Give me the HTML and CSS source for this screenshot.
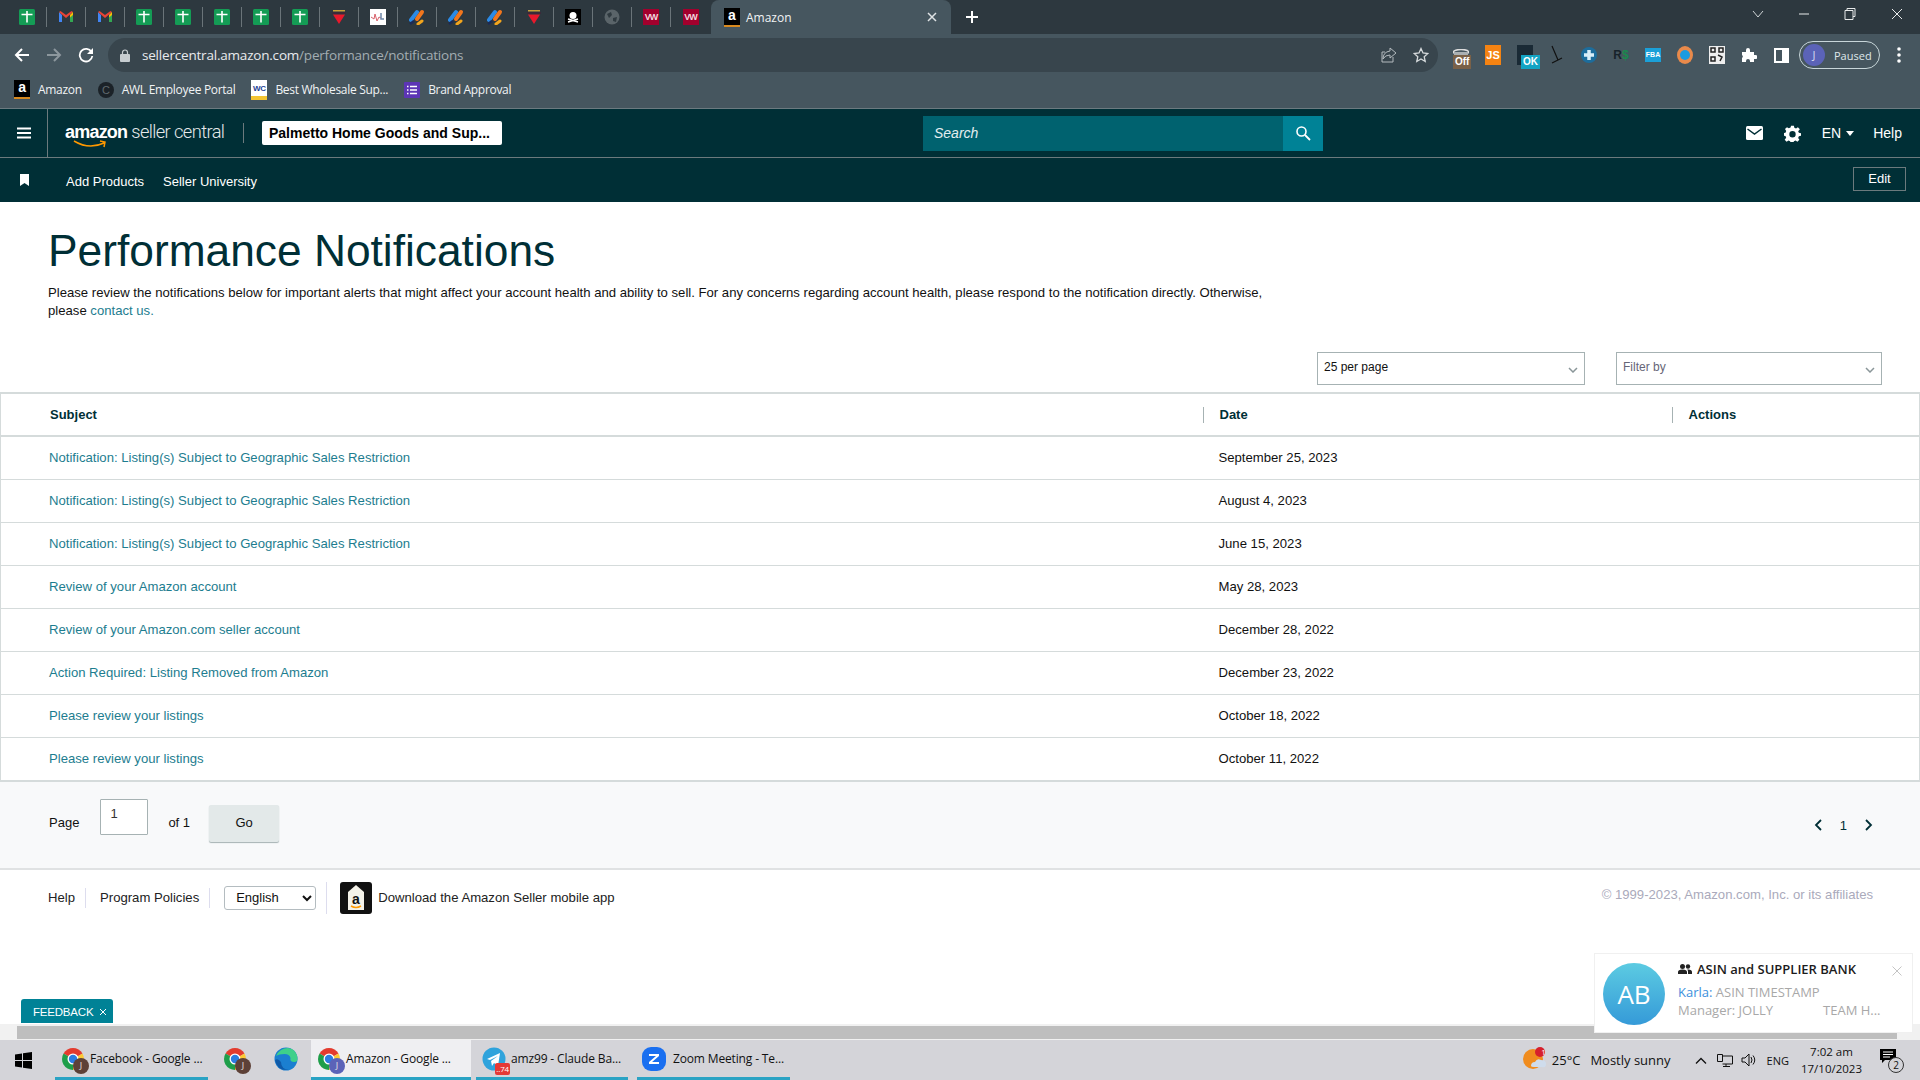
FILE: index.html
```html
<!DOCTYPE html>
<html lang="en">
<head>
    <meta charset="UTF-8">
    <title>Amazon</title>
    <link rel="stylesheet" href="styles.css">
</head>
<body>
    <svg class="defs" width="0" height="0">
        <symbol id="sheet" viewBox="0 0 16 16"><rect width="16" height="16" rx="1.5" fill="#149c55"/><path d="M2.5 5.5h11M8 2v11.5" stroke="#fff" stroke-width="1.6" fill="none"/></symbol>
        <symbol id="gmail" viewBox="0 0 16 16"><path d="M1 3v10h3V6z" fill="#4285f4"/><path d="M15 3v10h-3V6z" fill="#34a853"/><path d="M1 3l7 6 7-6-1.5-1L8 6 2.500 2z" fill="#ea4335"/><path d="M12 6l3-3v3l-3 2.500z" fill="#fbbc04"/></symbol>
        <symbol id="funnel" viewBox="0 0 16 16"><path d="M2 1h12v1.500H2z" fill="#c9a13a"/><rect x="1" y="3" width="14" height="2" fill="#3a2a3a"/><path d="M2 5.500h12L8 15z" fill="#e8192c"/></symbol>
        <symbol id="chart" viewBox="0 0 16 16"><rect width="16" height="16" fill="#fff"/><path d="M1 8l3 2 1-5 2 7 2-4 2 1" stroke="#d8606a" fill="none"/><path d="M11 4v6h3" stroke="#6d86a8" stroke-width="1.500" fill="none"/></symbol>
        <symbol id="pills" viewBox="0 0 16 16"><path d="M2 11l6-8" stroke="#2b8ae6" stroke-width="4" stroke-linecap="round"/><path d="M8 10l5-7" stroke="#f2761d" stroke-width="4" stroke-linecap="round"/><path d="M1 15l4-3" stroke="#1c2a55" stroke-width="2.500"/><path d="M9 15l4-3" stroke="#f2a51d" stroke-width="3" stroke-linecap="round"/></symbol>
        <symbol id="skull" viewBox="0 0 16 16"><rect width="16" height="16" fill="#000"/><circle cx="8" cy="6.500" r="3.500" fill="#fff"/><path d="M3 10l10 3M13 10L3 13" stroke="#fff" stroke-width="1.500"/></symbol>
        <symbol id="globe" viewBox="0 0 16 16"><circle cx="8" cy="8" r="7.500" fill="#5a6469"/><path d="M3 5l4-2 1 3-3 3zM9 9l4-1-1 5-3-1z" fill="#2f3a40"/></symbol>
        <symbol id="chrome" viewBox="0 0 24 24"><path d="M12 12L2.500 6.500A11 11 0 0 1 21.500 6.500Z" fill="#e33b2e"/><path d="M12 12L21.500 6.500A11 11 0 0 1 12 23Z" fill="#fcc934"/><path d="M12 12L12 23A11 11 0 0 1 2.500 6.500Z" fill="#1e9e4a"/><circle cx="12" cy="12" r="5.500" fill="#fff"/><circle cx="12" cy="12" r="4.200" fill="#2c7de1"/></symbol>
    </svg>

    <div class="tabstrip">
        <div class="tab"><svg class="fav"><use href="#sheet"/></svg></div>
        <div class="tab"><svg class="fav"><use href="#gmail"/></svg></div>
        <div class="tab"><svg class="fav"><use href="#gmail"/></svg></div>
        <div class="tab"><svg class="fav"><use href="#sheet"/></svg></div>
        <div class="tab"><svg class="fav"><use href="#sheet"/></svg></div>
        <div class="tab"><svg class="fav"><use href="#sheet"/></svg></div>
        <div class="tab"><svg class="fav"><use href="#sheet"/></svg></div>
        <div class="tab"><svg class="fav"><use href="#sheet"/></svg></div>
        <div class="tab"><svg class="fav"><use href="#funnel"/></svg></div>
        <div class="tab"><svg class="fav"><use href="#chart"/></svg></div>
        <div class="tab"><svg class="fav"><use href="#pills"/></svg></div>
        <div class="tab"><svg class="fav"><use href="#pills"/></svg></div>
        <div class="tab"><svg class="fav"><use href="#pills"/></svg></div>
        <div class="tab"><svg class="fav"><use href="#funnel"/></svg></div>
        <div class="tab"><svg class="fav"><use href="#skull"/></svg></div>
        <div class="tab"><svg class="fav"><use href="#globe"/></svg></div>
        <div class="tab"><span class="fav-wired">VW</span></div>
        <div class="tab tab-last"><span class="fav-wired">VW</span></div>
        <div class="tab-active">
            <span class="fav-amz">a</span>
            <span class="tab-title">Amazon</span>
            <svg class="tab-close" width="10" height="10" viewBox="0 0 10 10"><path d="M1 1l8 8M9 1l-8 8" stroke="#dfe3e5" stroke-width="1.500"/></svg>
        </div>
        <svg class="tab-new" width="14" height="14" viewBox="0 0 14 14"><path d="M7 1v12M1 7h12" stroke="#fff" stroke-width="2"/></svg>
        <div class="win-controls">
            <svg width="12" height="8" viewBox="0 0 12 8"><path d="M1 1l5 6 5-6" stroke="#cfd4d6" fill="none"/></svg>
            <svg width="10" height="2" viewBox="0 0 10 2"><path d="M0 1h10" stroke="#e8eaeb"/></svg>
            <svg width="12" height="12" viewBox="0 0 12 12"><path d="M3 2.500V.5h8v8H9M1 2.500h8v9H1z" stroke="#e8eaeb" fill="none"/></svg>
            <svg width="12" height="12" viewBox="0 0 12 12"><path d="M1 1l10 10M11 1L1 11" stroke="#e8eaeb"/></svg>
        </div>
    </div>

    <div class="toolbar">
        <svg class="nav-btn" width="16" height="16" viewBox="0 0 16 16"><path d="M15 8H2M8 2L2 8l6 6" stroke="#fff" stroke-width="2" fill="none"/></svg>
        <svg class="nav-btn" width="16" height="16" viewBox="0 0 16 16"><path d="M1 8h13M8 2l6 6-6 6" stroke="#8c979d" stroke-width="2" fill="none"/></svg>
        <svg class="nav-btn" width="16" height="16" viewBox="0 0 16 16"><path d="M13.500 5A6.300 6.300 0 1 0 14.300 9" stroke="#fff" stroke-width="1.800" fill="none"/><path d="M15 1v6H9z" fill="#fff"/></svg>
        <div class="omnibox">
            <svg class="lock" width="10" height="13" viewBox="0 0 10 13"><path d="M2.500 6V3.500a2.500 2.500 0 0 1 5 0V6" stroke="#c6ccd0" stroke-width="1.200" fill="none"/><rect y="5" width="10" height="8" rx="1" fill="#c6ccd0"/></svg>
            <span class="url">sellercentral.amazon.com<span class="url-path">/performance/notifications</span></span>
            <svg class="omni-icon" width="16" height="16" viewBox="0 0 16 16"><path d="M9 1l6 5-6 5V8Q4 8 2 12q0-7 7-8zM12 10v5H1V5h3" stroke="#b4bbbf" fill="none"/></svg>
            <svg class="omni-icon" width="16" height="16" viewBox="0 0 16 16"><path d="M8 1.500l2 4.500 4.800.5-3.600 3.200 1 4.800L8 12l-4.200 2.500 1-4.800L1.200 6.500 6 6z" stroke="#d5d9db" stroke-width="1.300" fill="none"/></svg>
        </div>
        <div class="extensions">
            <div class="ext"><svg width="16" height="12" viewBox="0 0 16 12"><ellipse cx="8" cy="3" rx="7.500" ry="2.500" fill="none" stroke="#ddd" stroke-width="1.500"/><path d="M1 3v8h14V3" fill="#aab0b3"/></svg><span class="ext-off">Off</span></div>
            <div class="ext"><span class="ext-js">JS</span></div>
            <div class="ext"><span class="ext-dark"></span><span class="ext-ok">OK</span></div>
            <div class="ext"><svg width="12" height="20" viewBox="0 0 12 20"><path d="M1 1l6 14M1 18l10-5" stroke="#111" stroke-width="1.200"/></svg></div>
            <div class="ext"><svg width="16" height="16" viewBox="0 0 16 16"><circle cx="8" cy="8" r="8" fill="#1d6d9c"/><path d="M8 3v10M3 8h10" stroke="#d9eef8" stroke-width="3.500"/></svg></div>
            <div class="ext"><span class="ext-rs">R<b>$</b></span></div>
            <div class="ext"><span class="ext-fba">FBA</span></div>
            <div class="ext"><svg width="16" height="18" viewBox="0 0 16 18"><ellipse cx="8" cy="9" rx="8" ry="9" fill="#e98a4b"/><circle cx="8" cy="9" r="5" fill="#1b9be0"/></svg></div>
            <div class="ext"><svg width="16" height="18" viewBox="0 0 16 18"><rect width="16" height="18" fill="#eee"/><path d="M2 2h4v4H2zM10 2h4v4h-4zM2 11h4v4H2zM9 9l4 2-2 4" fill="none" stroke="#222" stroke-width="1.500"/></svg></div>
            <div class="ext"><svg width="16" height="16" viewBox="0 0 16 16"><path d="M1 5h4V3a2 2 0 0 1 4 0v2h4v3h1.500a2 2 0 0 1 0 4H13v3H9v-1a2 2 0 0 0-4 0v1H1v-4a2 2 0 0 0 0-3z" fill="#fff"/></svg></div>
            <div class="ext"><span class="ext-panel"></span></div>
        </div>
        <div class="profile"><span class="profile-avatar">J</span><span>Paused</span></div>
        <svg class="more" width="4" height="16" viewBox="0 0 4 16"><circle cx="2" cy="2" r="1.800" fill="#fff"/><circle cx="2" cy="8" r="1.800" fill="#fff"/><circle cx="2" cy="14" r="1.800" fill="#fff"/></svg>
    </div>

    <div class="bookmarks">
        <div class="bm"><span class="fav-amz">a</span>Amazon</div>
        <div class="bm"><span class="fav-c">C</span>AWL Employee Portal</div>
        <div class="bm"><span class="fav-wc">WC</span>Best Wholesale Sup...</div>
        <div class="bm"><svg width="16" height="16" viewBox="0 0 16 16"><rect width="16" height="16" rx="1" fill="#5c35b5"/><path d="M3 4.500h1.500M3 8h1.500M3 11.500h1.500M6 4.500h7M6 8h7M6 11.500h7" stroke="#fff" stroke-width="1.500"/></svg>Brand Approval</div>
    </div>

    <header class="topbar">
        <div class="menu-cell">
            <svg width="14" height="12" viewBox="0 0 14 12"><path d="M0 1.500h14M0 6h14M0 10.500h14" stroke="#fff" stroke-width="1.800"/></svg>
        </div>
        <div class="logo"><span class="logo-amazon">amazon</span><span class="logo-seller">seller central</span>
            <svg class="logo-smile" width="34" height="9" viewBox="0 0 34 9"><path d="M1 1q15 9 30 2M27 1l5 1-1 5" stroke="#f90" stroke-width="1.500" fill="none"/></svg>
        </div>
        <span class="logo-sep"></span>
        <div class="account">Palmetto Home Goods and Sup...</div>
        <div class="search">
            <span class="search-text">Search</span>
            <span class="search-btn"><svg width="16" height="16" viewBox="0 0 16 16"><circle cx="6.500" cy="6.500" r="4.500" stroke="#fff" stroke-width="1.600" fill="none"/><path d="M10 10l5 5" stroke="#fff" stroke-width="1.800"/></svg></span>
        </div>
        <div class="top-right">
            <svg width="17" height="14" viewBox="0 0 17 14"><rect width="17" height="14" rx="1.500" fill="#fff"/><path d="M1.500 3l7 5 7-5" stroke="#002f36" stroke-width="1.500" fill="none"/></svg>
            <svg class="gear" width="17" height="17" viewBox="0 0 24 24"><path fill="#fff" fill-rule="evenodd" d="M10 1h4l.6 3 2.400 1 2.600-1.700 2.800 2.800L20 8.700l1 2.400 3 .6v3.600l-3 .6-1 2.400 1.700 2.600-2.800 2.800-2.600-1.700-2.400 1-.6 3h-4l-.6-3-2.400-1-2.600 1.700-2.800-2.800L3.100 18l-1-2.400-3-.6v-3.600l3-.6 1-2.400L1.400 5.800l2.800-2.800L6.800 4.700l2.400-1zM12 8.500a4.500 4.500 0 1 0 0 9 4.500 4.500 0 0 0 0-9z"/></svg>
            <span class="lang">EN<svg width="8" height="5" viewBox="0 0 8 5"><path d="M0 0h8L4 5z" fill="#fff"/></svg></span>
            <span>Help</span>
        </div>
    </header>

    <nav class="subnav">
        <svg class="subnav-mark" width="9" height="12" viewBox="0 0 9 12"><path d="M0 0h9v12L4.500 9 0 12z" fill="#fff"/></svg>
        <a class="subnav-link">Add Products</a>
        <a class="subnav-link">Seller University</a>
        <span class="edit-btn">Edit</span>
    </nav>

    <main class="page">
        <h1 class="title">Performance Notifications</h1>
        <div class="intro">
            <p class="intro-line">Please review the notifications below for important alerts that might affect your account health and ability to sell. For any concerns regarding account health, please respond to the notification directly. Otherwise,</p>
            <p class="intro-line">please <a class="link">contact us.</a></p>
        </div>

        <div class="filters">
            <div class="picker picker-page">25 per page<svg width="10" height="6" viewBox="0 0 10 6"><path d="M1 1l4 4 4-4" stroke="#8a9699" stroke-width="1.500" fill="none"/></svg></div>
            <div class="picker picker-filter">Filter by<svg width="10" height="6" viewBox="0 0 10 6"><path d="M1 1l4 4 4-4" stroke="#8a9699" stroke-width="1.500" fill="none"/></svg></div>
        </div>

        <table class="notes">
            <colgroup><col class="col-subject"><col class="col-date"><col></colgroup>
            <thead>
                <tr>
                    <th><span>Subject</span></th>
                    <th><span class="th-div">Date</span></th>
                    <th><span class="th-div">Actions</span></th>
                </tr>
            </thead>
            <tbody>
                <tr><td><a class="link">Notification: Listing(s) Subject to Geographic Sales Restriction</a></td><td>September 25, 2023</td><td></td></tr>
                <tr><td><a class="link">Notification: Listing(s) Subject to Geographic Sales Restriction</a></td><td>August 4, 2023</td><td></td></tr>
                <tr><td><a class="link">Notification: Listing(s) Subject to Geographic Sales Restriction</a></td><td>June 15, 2023</td><td></td></tr>
                <tr><td><a class="link">Review of your Amazon account</a></td><td>May 28, 2023</td><td></td></tr>
                <tr><td><a class="link">Review of your Amazon.com seller account</a></td><td>December 28, 2022</td><td></td></tr>
                <tr><td><a class="link">Action Required: Listing Removed from Amazon</a></td><td>December 23, 2022</td><td></td></tr>
                <tr><td><a class="link">Please review your listings</a></td><td>October 18, 2022</td><td></td></tr>
                <tr><td><a class="link">Please review your listings</a></td><td>October 11, 2022</td><td></td></tr>
            </tbody>
        </table>

        <div class="pager">
            <span class="pager-label">Page</span>
            <input class="pager-input" value="1">
            <span class="pager-of">of 1</span>
            <span class="go-btn">Go</span>
            <div class="pager-nums">
                <svg width="8" height="12" viewBox="0 0 8 12"><path d="M7 1L2 6l5 5" stroke="#002f36" stroke-width="1.800" fill="none"/></svg>
                <span>1</span>
                <svg width="8" height="12" viewBox="0 0 8 12"><path d="M1 1l5 5-5 5" stroke="#002f36" stroke-width="1.800" fill="none"/></svg>
            </div>
        </div>

        <footer class="footer">
            <a class="foot-link">Help</a>
            <a class="foot-link foot-second">Program Policies</a>
            <select class="foot-lang"><option>English</option></select>
            <span class="foot-app">
                <svg width="32" height="32" viewBox="0 0 32 32"><rect width="32" height="32" rx="3" fill="#111"/><path d="M16 3l8 7v18H8V10z" fill="#f4f2e9"/><path d="M11 24q5 3 10 0" stroke="#f90" stroke-width="1.500" fill="none"/><text x="16" y="22" text-anchor="middle" font-family="Liberation Sans" font-weight="700" font-size="14" fill="#111">a</text></svg>
                Download the Amazon Seller mobile app
            </span>
            <span class="copyright">© 1999-2023, Amazon.com, Inc. or its affiliates</span>
        </footer>

        <div class="scrollbar"><span class="scroll-arrow"></span><span class="scroll-thumb"></span></div>
    </main>

    <div class="feedback">FEEDBACK<svg width="8" height="8" viewBox="0 0 8 8"><path d="M1 1l6 6M7 1L1 7" stroke="#fff"/></svg></div>

    <div class="toast">
        <span class="toast-avatar">AB</span>
        <div class="toast-body">
            <div class="toast-title"><svg width="14" height="10" viewBox="0 0 14 10"><circle cx="4.500" cy="2.500" r="2.500" fill="#222"/><circle cx="10" cy="2.500" r="2.200" fill="#222"/><path d="M0 10V8q0-2.500 4.500-2.500T9 8v2zM10 10V7.500q0-1-.8-2 4.800-.4 4.800 2.500v2z" fill="#222"/></svg>ASIN and SUPPLIER BANK</div>
            <div class="toast-line"><span class="toast-name">Karla:</span> ASIN TIMESTAMP</div>
            <div class="toast-line toast-split"><span>Manager: JOLLY</span><span>TEAM H...</span></div>
        </div>
        <svg class="toast-close" width="10" height="10" viewBox="0 0 10 10"><path d="M.5.5l9 9M9.500.5l-9 9" stroke="#c4c4c4"/></svg>
    </div>

    <div class="taskbar">
        <svg class="win-logo" width="17" height="17" viewBox="0 0 17 17"><path d="M0 2.500l7-1V8H0zM8 1.300L17 0v8H8zM0 9h7v6.500l-7-1zM8 9h9v8l-9-1.300z" fill="#000"/></svg>
        <div class="tb-item tb-fb"><span class="tb-icon"><svg width="24" height="24"><use href="#chrome"/></svg><span class="tb-badge tb-brown">J</span></span>Facebook - Google ...</div>
        <div class="tb-plain tb-chrome2"><span class="tb-icon"><svg width="24" height="24"><use href="#chrome"/></svg><span class="tb-badge tb-brown">J</span></span></div>
        <div class="tb-plain tb-edge"><svg width="24" height="24" viewBox="0 0 24 24"><circle cx="12" cy="12" r="11.500" fill="#1b7fd0"/><path d="M2 9Q6 1 14 1q9 1 9.500 11 0 3-3 3-5 0-4-4-1-4-6-4-6 0-8.500 2z" fill="#3ed08a"/><path d="M7 15q0 7 8 8-12 1-14-10 3-2 6 2z" fill="#0f5aa8"/></svg></div>
        <div class="tb-item tb-active"><span class="tb-icon"><svg width="24" height="24"><use href="#chrome"/></svg><span class="tb-badge tb-blue">J</span></span>Amazon - Google ...</div>
        <div class="tb-item tb-tele"><span class="tb-icon"><svg width="24" height="24" viewBox="0 0 24 24"><circle cx="12" cy="12" r="11.500" fill="#2fa3dc"/><path d="M5 12l13-6-2 13-4-3-2 3-1-5 7-5-8 4z" fill="#fff"/></svg><span class="tb-count">..74</span></span>amz99 - Claude Ba...</div>
        <div class="tb-item tb-zoom"><span class="tb-icon"><svg width="24" height="24" viewBox="0 0 24 24"><rect width="24" height="24" rx="9" fill="#1a6ff0"/><path d="M7 7h10v2l-7 6h7v2H7v-2l7-6H7z" fill="#fff"/></svg></span>Zoom Meeting - Te...</div>
        <div class="tray">
            <span class="weather"><svg width="24" height="24" viewBox="0 0 24 24"><circle cx="10" cy="12" r="10" fill="#f08c1e"/><path d="M8 19q0-4 4-4 2-4 6-2 5 0 5 4t-4 3H11q-3 0-3-1z" fill="#cfdcec"/><circle cx="17" cy="5" r="5" fill="#d6202c"/></svg><span class="weather-num">1</span></span>
            <span class="tray-temp">25°C</span>
            <span class="tray-sky">Mostly sunny</span>
            <svg class="tray-up" width="12" height="7" viewBox="0 0 12 7"><path d="M1 6.500l5-5 5 5" stroke="#111" stroke-width="1.300" fill="none"/></svg>
            <svg width="16" height="14" viewBox="0 0 16 14"><path d="M.5 1.500h5v7h-5zM5.500 3h10v8h-10M9 11v2.500M6 13.500h7" stroke="#111" fill="none"/></svg>
            <svg width="16" height="14" viewBox="0 0 16 14"><path d="M1 5h3l4-4v12L4 9H1zM10 4q2 3 0 6M12 2.500q3.500 4.500 0 9" stroke="#111" fill="none"/></svg>
            <span class="tray-lang">ENG</span>
            <span class="tray-clock">7:02 am<br>17/10/2023</span>
            <span class="tray-note"><svg width="16" height="15" viewBox="0 0 16 15"><path d="M0 0h16v11H5l-3 3v-3H0z" fill="#000"/><path d="M3 3h10M3 5.500h10M3 8h7" stroke="#fff"/></svg><span class="tray-note-num">2</span></span>
        </div>
    </div>
</body>
</html>
```
FILE: styles.css
```css
* {box-sizing: border-box;}
html, body {
    margin: 0;
    height: 100%;
}
body {
    display: flex;
    flex-direction: column;
    height: 1080px;
    overflow: hidden;
    position: relative;
    background: #fff;
    color: #111;
    font-family: "Liberation Sans", Arial, sans-serif;
    font-size: 13px;
}
.defs {
    position: absolute;
}
svg {
    flex: none;
}
a {
    text-decoration: none;
}

/* browser tabs */
.tabstrip {
    display: flex;
    align-items: center;
    flex: none;
    height: 34px;
    padding-left: 8px;
    background: #2d383f;
}
.tab {
    display: flex;
    align-items: center;
    justify-content: center;
    width: 39px;
    height: 20px;
    border-right: 1px solid #6a7479;
}
.tab-last {
    border-right: none;
}
.fav {
    width: 16px;
    height: 16px;
}
.fav-wired {
    display: block;
    width: 16px;
    height: 16px;
    overflow: hidden;
    background: #a3002d;
    color: #f0d8de;
    font: 700 9px/16px "Liberation Sans", sans-serif;
    letter-spacing: -1px;
    text-align: center;
}
.fav-amz {
    display: block;
    flex: none;
    width: 16px;
    height: 19px;
    background: #000;
    color: #fff;
    font: 700 14px/15px "Liberation Sans", sans-serif;
    text-align: center;
    border-bottom: 2px solid #d98a1f;
}
.tab-active {
    display: flex;
    align-items: center;
    width: 240px;
    height: 34px;
    margin-left: 1px;
    padding: 0 14px 0 13px;
    border-radius: 8px 8px 0 0;
    background: #46565f;
    color: #f1f3f4;
    font: 12px "Open Sans", sans-serif;
}
.tab-title {
    flex: 1;
    margin-left: 6px;
}
.tab-new {
    margin-left: 14px;
}
.win-controls {
    display: flex;
    align-items: center;
    gap: 35px;
    margin-left: auto;
    margin-right: 17px;
    margin-bottom: 6px;
}

/* address bar */
.toolbar {
    display: flex;
    align-items: center;
    flex: none;
    height: 38px;
    padding: 4px 0 0 14px;
    background: #46565f;
}
.nav-btn {
    margin-right: 16px;
}
.omnibox {
    display: flex;
    align-items: center;
    width: 1330px;
    height: 34px;
    margin-left: -2px;
    padding: 0 9px 0 12px;
    border-radius: 17px;
    background: #38454d;
}
.lock {
    margin-right: 12px;
}
.url {
    flex: 1;
    color: #e8eaed;
    font: 13.5px "Open Sans", sans-serif;
    letter-spacing: -0.2px;
}
.url-path {
    color: #a3adb2;
}
.omni-icon {
    margin-left: 16px;
}
.extensions {
    display: flex;
    margin-left: 7px;
}
.ext {
    display: flex;
    align-items: center;
    justify-content: center;
    position: relative;
    width: 32px;
    height: 30px;
}
.ext-off, .ext-ok {
    position: absolute;
    left: 8px;
    top: 15px;
    padding: 0 2px;
    color: #fff;
    font: 700 10px/14px "Liberation Sans", sans-serif;
}
.ext-off {
    background: #7a6148;
}
.ext-ok {
    left: 12px;
    background: #12a4c4;
}
.ext-js {
    display: block;
    width: 16px;
    height: 20px;
    background: #f58312;
    color: #fff;
    font: 700 11px/20px "Liberation Sans", sans-serif;
    text-align: center;
}
.ext-dark {
    display: block;
    width: 16px;
    height: 20px;
    background: #1a2a35;
}
.ext-rs {
    color: #17232a;
    font: 700 12px "Liberation Sans", sans-serif;
}
.ext-rs b {
    color: #1a8a4e;
}
.ext-fba {
    display: block;
    width: 16px;
    height: 14px;
    background: #1ba0d8;
    color: #fff;
    font: 700 7px/14px "Liberation Sans", sans-serif;
    text-align: center;
}
.ext-panel {
    display: block;
    width: 15px;
    height: 15px;
    border: 2px solid #fff;
    border-right-width: 7px;
}
.profile {
    display: flex;
    align-items: center;
    gap: 9px;
    width: 81px;
    height: 28px;
    margin-left: 2px;
    padding-left: 3px;
    border: 1px solid #c8d6da;
    border-radius: 14px;
    color: #dfe7ea;
    font: 11px "Open Sans", sans-serif;
}
.profile-avatar {
    width: 22px;
    height: 22px;
    border-radius: 50%;
    background: #5b63b8;
    color: #d8dbf2;
    line-height: 22px;
    text-align: center;
}
.more {
    margin-left: 17px;
}

/* bookmarks */
.bookmarks {
    display: flex;
    align-items: center;
    flex: none;
    gap: 16px;
    height: 37px;
    padding: 0 0 1px 14px;
    background: #46565f;
    color: #f1f3f4;
    font: 12px "Open Sans", sans-serif;
    letter-spacing: -0.3px;
    border-bottom: 1px solid #6c7a80;
}
.bm {
    display: flex;
    align-items: center;
    gap: 8px;
}
.fav-c {
    display: block;
    width: 16px;
    height: 16px;
    border-radius: 50%;
    background: #1b2228;
    color: #60696e;
    font: 11px/16px "Liberation Sans", sans-serif;
    text-align: center;
}
.fav-wc {
    display: block;
    width: 16px;
    height: 20px;
    padding-top: 3px;
    background: #fff;
    border-bottom: 4px solid #f4c430;
    color: #1d3f94;
    font: 700 8px/11px "Liberation Sans", sans-serif;
    text-align: center;
}

/* seller central header */
.topbar {
    display: flex;
    align-items: center;
    flex: none;
    height: 49px;
    background: #002f36;
    border-bottom: 1px solid #6b7a7d;
    color: #fff;
}
.menu-cell {
    display: flex;
    align-items: center;
    justify-content: center;
    width: 48px;
    height: 48px;
    border-right: 1px solid #6b7a7d;
}
.logo {
    position: relative;
    display: flex;
    flex: none;
    align-items: baseline;
    width: 160px;
    margin-left: 17px;
    margin-top: -3px;
    white-space: nowrap;
}
.logo-amazon {
    font-size: 18px;
    font-weight: 700;
    letter-spacing: -0.8px;
}
.logo-seller {
    margin-left: 4px;
    color: #e6eaeb;
    font: 300 18.3px Roboto, sans-serif;
    letter-spacing: -0.6px;
}
.logo-smile {
    position: absolute;
    left: 8px;
    top: 19px;
}
.logo-sep {
    width: 1px;
    height: 20px;
    margin-left: 18px;
    background: #6b7a7d;
}
.account {
    width: 240px;
    height: 24px;
    margin-left: 18px;
    padding-left: 7px;
    border-radius: 2px;
    background: #fff;
    color: #000;
    font: 700 14px/24px "Liberation Sans", sans-serif;
}
.search {
    display: flex;
    width: 400px;
    height: 35px;
    margin-left: 421px;
    background: #00626f;
}
.search-text {
    flex: 1;
    padding-left: 11px;
    color: #e4eef0;
    font-size: 14px;
    font-style: italic;
    line-height: 35px;
}
.search-btn {
    display: flex;
    align-items: center;
    justify-content: center;
    width: 40px;
    background: #008296;
}
.top-right {
    display: flex;
    align-items: center;
    margin-left: auto;
    margin-right: 18px;
    font-size: 14px;
}
.gear {
    margin-left: 21px;
}
.lang {
    display: flex;
    align-items: center;
    gap: 5px;
    margin: 0 19px 0 21px;
}

/* shortcuts bar */
.subnav {
    display: flex;
    align-items: center;
    flex: none;
    height: 44px;
    padding: 3px 0 0 20px;
    background: #002f36;
    color: #fff;
}
.subnav-mark {
    margin-right: 37px;
    margin-bottom: 3px;
}
.subnav-link {
    margin-right: 19px;
    font-size: 13px;
}
.edit-btn {
    width: 53px;
    height: 24px;
    margin: -5px 14px 0 auto;
    border: 1px solid #6b7a7d;
    font-size: 13px;
    line-height: 22px;
    text-align: center;
}

/* page */
.page {
    display: flex;
    flex-direction: column;
    flex: 1;
    min-height: 0;
}
.title {
    margin: 24px 0 0 48px;
    color: #002f36;
    font-size: 44.3px;
    font-weight: 400;
    line-height: 50px;
}
.intro {
    margin: 8px 0 0 48px;
    color: #111;
    font-size: 13.13px;
    line-height: 18px;
}
.intro-line {
    margin: 0;
}
.link {
    color: #1d7d8f;
}
.filters {
    display: flex;
    justify-content: flex-end;
    gap: 31px;
    margin: 32px 38px 0 0;
    height: 33px;
}
.picker {
    display: flex;
    align-items: center;
    justify-content: space-between;
    height: 33px;
    padding: 0 6px 3px 6px;
    border: 1px solid #a6b2b3;
    font-size: 12px;
}
.picker svg {
    margin-top: 5px;
}
.picker-page {
    width: 268px;
}
.picker-filter {
    width: 266px;
    color: #667;
}
.notes {
    width: 100%;
    margin-top: 7px;
    border-collapse: collapse;
    table-layout: fixed;
    border: 1px solid #d5dbdb;
    border-top-width: 2px;
}
.col-subject {
    width: 1202px;
}
.col-date {
    width: 469px;
}
.notes th {
    height: 43px;
    padding: 0;
    text-align: left;
    color: #002f36;
    font-size: 13px;
    border-bottom: 2px solid #d5dbdb;
}
.notes th span {
    display: block;
    line-height: 16px;
    padding-left: 49px;
}
.notes th .th-div {
    padding-left: 16px;
    border-left: 1px solid #a6b2b3;
}
.notes td {
    height: 43px;
    padding: 0 0 0 48px;
    border-bottom: 1px solid #d5dbdb;
    font-size: 13.13px;
}
.notes td + td {
    padding-left: 16px;
}
.pager {
    display: flex;
    align-items: flex-start;
    flex: none;
    height: 89px;
    padding: 17px 47px 0 49px;
    background: #f8f9fa;
    border-top: 1px solid #d5dbdb;
    border-bottom: 2px solid #e0e2e3;
    font-size: 13px;
}
.pager-label {
    margin-top: 16px;
}
.pager-input {
    width: 48px;
    height: 36px;
    margin-left: 21px;
    padding: 0 9px 6px;
    border: 1px solid #a6b2b3;
    border-radius: 1px;
    background: #fff;
    color: #333;
    font: 13px "Liberation Sans", sans-serif;
}
.pager-of {
    margin: 16px 0 0 20px;
}
.go-btn {
    width: 70px;
    height: 37px;
    margin: 6px 0 0 19px;
    border-radius: 2px;
    background: #e3e9e9;
    box-shadow: 0 1px 1px #a6b2b3;
    line-height: 36px;
    text-align: center;
}
.pager-nums {
    display: flex;
    align-items: center;
    gap: 18px;
    margin: 19px 0 0 auto;
    color: #002f36;
    font-size: 13px;
}
.footer {
    display: flex;
    align-items: center;
    flex: none;
    height: 54px;
    padding: 2px 47px 0 48px;
    font-size: 13.13px;
    color: #222;
}
.foot-link {
    padding-right: 10px;
    border-right: 1px solid #dde;
    line-height: 20px;
}
.foot-second {
    margin-left: 14px;
}
.foot-lang {
    width: 92px;
    height: 24px;
    margin-left: 14px;
    padding-left: 7px;
    border: 1px solid #b4bcc0;
    border-radius: 3px;
    background: #fff;
    color: #111;
    font: 13px "Liberation Sans", sans-serif;
}
.foot-app {
    display: flex;
    align-items: center;
    gap: 6px;
    margin-left: 10px;
    padding-left: 13px;
    border-left: 1px solid #dde;
}
.copyright {
    margin-left: auto;
    margin-bottom: 7px;
    color: #aab;
}
.scrollbar {
    display: flex;
    margin-top: auto;
    height: 16px;
    padding: 2px 0 1px;
    background: #f1f1f1;
}
.scroll-arrow {
    width: 17px;
}
.scroll-thumb {
    width: 1880px;
    background: #bebebe;
}

/* overlays */
.feedback {
    position: absolute;
    left: 21px;
    bottom: 57px;
    display: flex;
    align-items: center;
    gap: 6px;
    width: 92px;
    height: 24px;
    padding: 1px 0 0 12px;
    border-radius: 3px 3px 0 0;
    background: #008296;
    color: #fff;
    font-size: 11.500px;
    letter-spacing: -0.2px;
}
.toast {
    position: absolute;
    right: 7px;
    bottom: 47px;
    display: flex;
    width: 319px;
    height: 80px;
    padding: 9px 10px 0 8px;
    background: #fff;
    border: 1px solid #f0f0f0;
    font: 13px "Open Sans", sans-serif;
}
.toast-avatar {
    flex: none;
    width: 62px;
    height: 62px;
    border-radius: 50%;
    background: linear-gradient(#5ccbe2, #359ad8);
    color: #fff;
    font-size: 26px;
    line-height: 62px;
    text-align: center;
}
.toast-body {
    flex: 1;
    margin: -3px 0 0 13px;
    color: #a8a8a8;
    line-height: 18px;
}
.toast-title {
    display: flex;
    align-items: center;
    gap: 5px;
    margin-bottom: 5px;
    color: #1c1c1c;
    font-weight: 600;
}
.toast-name {
    color: #3c90dc;
}
.toast-split {
    display: flex;
    gap: 50px;
}
.toast-close {
    margin-top: 3px;
}

/* windows taskbar */
.taskbar {
    display: flex;
    align-items: stretch;
    flex: none;
    height: 40px;
    background: #d4d4d9;
    color: #111;
    font: 12px "Open Sans", sans-serif;
}
.win-logo {
    align-self: center;
    margin: 0 0 0 15px;
}
.tb-item {
    display: flex;
    align-items: center;
    gap: 2px;
    padding-left: 6px;
    letter-spacing: -0.15px;
    border-bottom: 3px solid #2aa3c4;
}
.tb-fb {
    width: 153px;
    margin-left: 23px;
}
.tb-plain {
    display: flex;
    align-items: center;
    justify-content: center;
    width: 49px;
    padding-bottom: 3px;
}
.tb-chrome2 {
    margin-left: 4px;
}
.tb-active {
    width: 160px;
    margin-left: 1px;
    background: #efeff2;
}
.tb-tele {
    width: 152px;
    margin-left: 5px;
}
.tb-zoom {
    width: 153px;
    margin-left: 9px;
    padding-left: 5px;
    gap: 4px;
}
.tb-icon {
    position: relative;
    display: block;
    flex: none;
    width: 24px;
    height: 24px;
    margin-right: 3px;
}
.tb-badge {
    position: absolute;
    right: -4px;
    bottom: -3px;
    width: 16px;
    height: 16px;
    border-radius: 50%;
    color: #e8e4e0;
    font-size: 9px;
    line-height: 16px;
    text-align: center;
}
.tb-brown {
    background: #5d4037;
}
.tb-blue {
    background: #5b63b8;
}
.tb-count {
    position: absolute;
    right: -4px;
    bottom: -4px;
    padding: 0 1px;
    border-radius: 2px;
    background: #e53935;
    color: #fff;
    font-size: 8px;
    line-height: 12px;
}
.tray {
    display: flex;
    align-items: center;
    margin-left: auto;
    padding-right: 18px;
}
.weather {
    position: relative;
    display: block;
    width: 24px;
    height: 24px;
    margin-bottom: 3px;
}
.weather-num {
    position: absolute;
    right: 1px;
    top: -1px;
    color: #fff;
    font-size: 8px;
    line-height: 12px;
}
.tray-temp {
    margin-left: 5px;
    font-size: 13px;
}
.tray-sky {
    margin-left: 10px;
    font-size: 13px;
}
.tray-up {
    margin: 0 10px 0 24px;
}
.tray svg + svg {
    margin-right: 8px;
}
.tray-lang {
    margin-left: 2px;
    font-size: 11px;
}
.tray-clock {
    margin-left: 12px;
    font-size: 11.500px;
    line-height: 17px;
    text-align: center;
}
.tray-note {
    position: relative;
    display: block;
    width: 22px;
    height: 22px;
    margin-left: 18px;
}
.tray-note-num {
    position: absolute;
    left: 8px;
    top: 8px;
    width: 16px;
    height: 16px;
    border: 1px solid #333;
    border-radius: 50%;
    background: #d4d4d9;
    font-size: 10px;
    line-height: 14px;
    text-align: center;
}
```
